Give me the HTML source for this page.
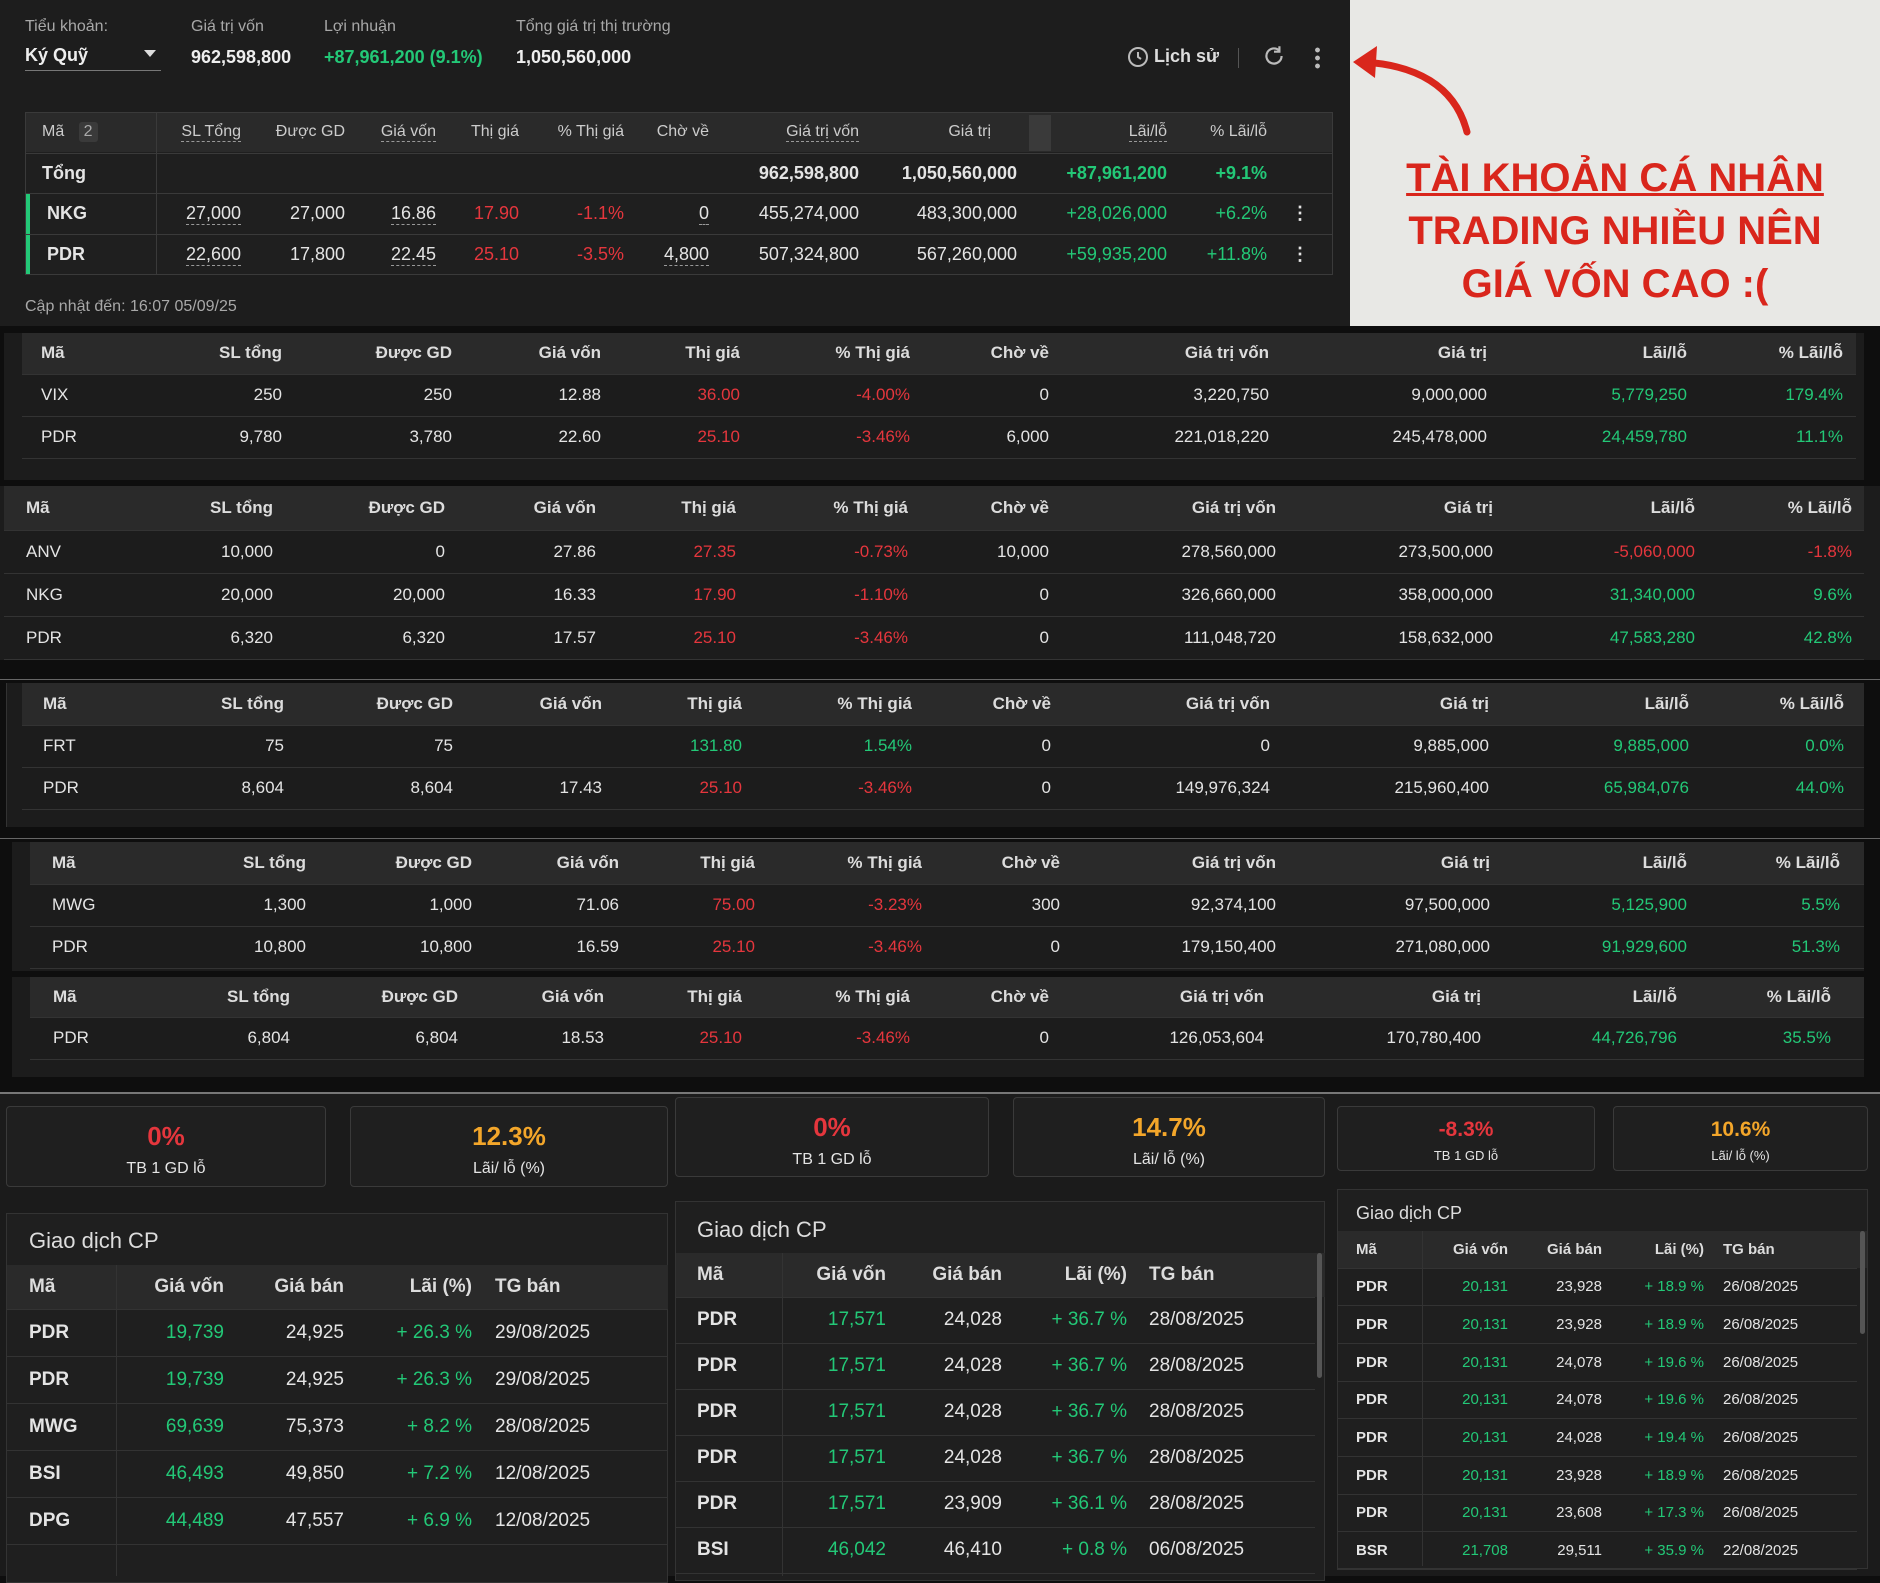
<!DOCTYPE html>
<html><head><meta charset="utf-8">
<style>
*{margin:0;padding:0;box-sizing:border-box}
body{width:1880px;height:1576px;background:#0e0e0e;position:relative;overflow:hidden;font-family:"Liberation Sans",sans-serif;color:#e4e4e4}
.abs{position:absolute}
table{position:absolute;border-collapse:collapse;table-layout:fixed}
td{text-align:right;white-space:nowrap;padding:0;overflow:visible}
td.l{text-align:left}
.g{color:#23c877}.r{color:#e5363d}.o{color:#f3a62a}
.hd td{font-weight:bold;color:#dcdcdc}
.sec{position:absolute;background:#1c1c1c}
.bt td{border-bottom:1px solid #333}
.du{border-bottom:1px dashed #999;padding-bottom:1px}
</style></head><body>

<!-- TOP SECTION -->
<div class="sec" style="left:0;top:0;width:1350px;height:326px;background:#1d1d1d"></div>
<div class="abs" style="left:25px;top:18px;font-size:16px;color:#a8a8a8">Tiểu khoản:</div>
<div class="abs" style="left:25px;top:45px;font-size:18px;font-weight:bold;color:#eee">Ký Quỹ</div>
<div class="abs" style="left:144px;top:50px;width:0;height:0;border-left:6px solid transparent;border-right:6px solid transparent;border-top:7px solid #ddd"></div>
<div class="abs" style="left:25px;top:70px;width:136px;height:1px;background:#777"></div>
<div class="abs" style="left:191px;top:18px;font-size:16px;color:#a8a8a8">Giá trị vốn</div>
<div class="abs" style="left:191px;top:47px;font-size:18px;font-weight:bold;color:#eee">962,598,800</div>
<div class="abs" style="left:324px;top:18px;font-size:16px;color:#a8a8a8">Lợi nhuận</div>
<div class="abs g" style="left:324px;top:47px;font-size:18px;font-weight:bold">+87,961,200 (9.1%)</div>
<div class="abs" style="left:516px;top:18px;font-size:16px;color:#a8a8a8">Tổng giá trị thị trường</div>
<div class="abs" style="left:516px;top:47px;font-size:18px;font-weight:bold;color:#eee">1,050,560,000</div>
<svg class="abs" style="left:1126px;top:45px" width="24" height="24" viewBox="0 0 24 24"><circle cx="12" cy="12" r="9" fill="none" stroke="#bbb" stroke-width="2"/><path d="M12 7v5l3 2" stroke="#bbb" stroke-width="2" fill="none"/></svg>
<div class="abs" style="left:1154px;top:46px;font-size:18px;font-weight:bold;color:#ddd">Lịch sử</div>
<div class="abs" style="left:1238px;top:48px;width:1px;height:20px;background:#555"></div>
<svg class="abs" style="left:1261px;top:43px" width="26" height="26" viewBox="0 0 24 24"><path d="M19 12a7 7 0 1 1-2.05-4.95" stroke="#bbb" stroke-width="2" fill="none"/><path d="M17 3v5h-5" stroke="#bbb" stroke-width="2" fill="none"/></svg>
<div class="abs" style="left:1315px;top:46px;width:5px;height:24px;background:radial-gradient(circle,#bbb 2.2px,transparent 2.6px) 0 0/5px 8px"></div>

<div class="abs" style="left:25px;top:112px;width:1308px;height:163px;border:1px solid #3a3a3a;background:#1f1f1f"></div>
<div class="abs" style="left:26px;top:113px;width:1306px;height:39px;background:#2a2a2a"></div>
<div class="abs" style="left:156px;top:113px;width:1px;height:161px;background:#3a3a3a"></div>
<div class="abs" style="left:1029px;top:115px;width:22px;height:36px;background:#3a3a3a"></div>
<div class="abs" style="left:26px;top:193px;width:4px;height:81px;background:#23c877"></div>
<table style="left:25px;top:112px;width:1308px;font-size:18px">
<colgroup><col style="width:131px"><col style="width:85px"><col style="width:104px"><col style="width:91px"><col style="width:83px"><col style="width:105px"><col style="width:85px"><col style="width:150px"><col style="width:158px"><col style="width:150px"><col style="width:100px"><col style="width:66px"></colgroup>
<tr style="height:41px;font-size:16px;color:#ccc"><td class="l" style="padding-left:17px">Mã <span style="display:inline-block;background:#3a3a3a;border-radius:3px;padding:1px 5px;margin-left:10px;color:#aaa">2</span></td><td><span class="du">SL Tổng</span></td><td>Được GD</td><td><span class="du">Giá vốn</span></td><td>Thị giá</td><td>% Thị giá</td><td>Chờ về</td><td><span class="du">Giá trị vốn</span></td><td style="padding-right:26px">Giá trị</td><td><span class="du">Lãi/lỗ</span></td><td>% Lãi/lỗ</td><td></td></tr>
<tr style="height:40px;font-weight:bold;border-top:1px solid #3a3a3a"><td class="l" style="padding-left:17px">Tổng</td><td></td><td></td><td></td><td></td><td></td><td></td><td>962,598,800</td><td>1,050,560,000</td><td class="g">+87,961,200</td><td class="g">+9.1%</td><td></td></tr>
<tr style="height:41px;border-top:1px solid #3a3a3a"><td class="l" style="padding-left:22px;font-weight:bold">NKG</td><td><span class="du">27,000</span></td><td>27,000</td><td><span class="du">16.86</span></td><td class="r">17.90</td><td class="r">-1.1%</td><td><span class="du">0</span></td><td>455,274,000</td><td>483,300,000</td><td class="g">+28,026,000</td><td class="g">+6.2%</td><td style="text-align:center;font-weight:bold">⋮</td></tr>
<tr style="height:41px;border-top:1px solid #3a3a3a"><td class="l" style="padding-left:22px;font-weight:bold">PDR</td><td><span class="du">22,600</span></td><td>17,800</td><td><span class="du">22.45</span></td><td class="r">25.10</td><td class="r">-3.5%</td><td><span class="du">4,800</span></td><td>507,324,800</td><td>567,260,000</td><td class="g">+59,935,200</td><td class="g">+11.8%</td><td style="text-align:center;font-weight:bold">⋮</td></tr>
</table>
<div class="abs" style="left:25px;top:298px;font-size:16px;color:#a8a8a8">Cập nhật đến: 16:07 05/09/25</div>

<!-- RIGHT ANNOTATION -->
<div class="abs" style="left:1350px;top:0;width:530px;height:326px;background:#e8e8e5"></div>
<div class="abs" style="left:1350px;top:152px;width:530px;text-align:center;font-size:40px;font-weight:bold;color:#d9261c;line-height:53px">
<span style="text-decoration:underline;text-decoration-thickness:3px">TÀI KHOẢN CÁ NHÂN</span><br>TRADING NHIỀU NÊN<br>GIÁ VỐN CAO :(</div>
<svg class="abs" style="left:1345px;top:40px" width="140" height="100" viewBox="0 0 140 100"><path d="M122 92 C110 45 70 25 18 22" stroke="#d9261c" stroke-width="7" fill="none" stroke-linecap="round"/><path d="M8 22 L32 6 L30 38 Z" fill="#d9261c"/></svg>

<!-- TABLE 1 -->
<div class="sec" style="left:4px;top:333px;width:1860px;height:147px"></div>
<div class="abs" style="left:22px;top:333px;width:1834px;height:41px;background:#2a2a2a"></div>
<table class="bt" style="left:22px;top:333px;width:1834px;font-size:17px">
<colgroup><col style="width:138px"><col style="width:122px"><col style="width:170px"><col style="width:149px"><col style="width:139px"><col style="width:170px"><col style="width:139px"><col style="width:220px"><col style="width:218px"><col style="width:200px"><col style="width:156px"><col style="width:13px"></colgroup>
<tr class="hd" style="height:41px"><td class="l" style="padding-left:19px">Mã</td><td>SL tổng</td><td>Được GD</td><td>Giá vốn</td><td>Thị giá</td><td>% Thị giá</td><td>Chờ về</td><td>Giá trị vốn</td><td>Giá trị</td><td>Lãi/lỗ</td><td>% Lãi/lỗ</td><td></td></tr>
<tr style="height:42px"><td class="l" style="padding-left:19px">VIX</td><td>250</td><td>250</td><td>12.88</td><td class="r">36.00</td><td class="r">-4.00%</td><td>0</td><td>3,220,750</td><td>9,000,000</td><td class="g">5,779,250</td><td class="g">179.4%</td><td></td></tr>
<tr style="height:42px"><td class="l" style="padding-left:19px">PDR</td><td>9,780</td><td>3,780</td><td>22.60</td><td class="r">25.10</td><td class="r">-3.46%</td><td>6,000</td><td>221,018,220</td><td>245,478,000</td><td class="g">24,459,780</td><td class="g">11.1%</td><td></td></tr>
</table>

<!-- TABLE 2 -->
<div class="sec" style="left:0;top:486px;width:1880px;height:174px"></div>
<div class="abs" style="left:4px;top:486px;width:1860px;height:44px;background:#2a2a2a"></div>
<table class="bt" style="left:4px;top:486px;width:1860px;font-size:17px">
<colgroup><col style="width:146px"><col style="width:123px"><col style="width:172px"><col style="width:151px"><col style="width:140px"><col style="width:172px"><col style="width:141px"><col style="width:227px"><col style="width:217px"><col style="width:202px"><col style="width:157px"><col style="width:12px"></colgroup>
<tr class="hd" style="height:44px"><td class="l" style="padding-left:22px">Mã</td><td>SL tổng</td><td>Được GD</td><td>Giá vốn</td><td>Thị giá</td><td>% Thị giá</td><td>Chờ về</td><td>Giá trị vốn</td><td>Giá trị</td><td>Lãi/lỗ</td><td>% Lãi/lỗ</td><td></td></tr>
<tr style="height:43px"><td class="l" style="padding-left:22px">ANV</td><td>10,000</td><td>0</td><td>27.86</td><td class="r">27.35</td><td class="r">-0.73%</td><td>10,000</td><td>278,560,000</td><td>273,500,000</td><td class="r">-5,060,000</td><td class="r">-1.8%</td><td></td></tr>
<tr style="height:43px"><td class="l" style="padding-left:22px">NKG</td><td>20,000</td><td>20,000</td><td>16.33</td><td class="r">17.90</td><td class="r">-1.10%</td><td>0</td><td>326,660,000</td><td>358,000,000</td><td class="g">31,340,000</td><td class="g">9.6%</td><td></td></tr>
<tr style="height:43px"><td class="l" style="padding-left:22px">PDR</td><td>6,320</td><td>6,320</td><td>17.57</td><td class="r">25.10</td><td class="r">-3.46%</td><td>0</td><td>111,048,720</td><td>158,632,000</td><td class="g">47,583,280</td><td class="g">42.8%</td><td></td></tr>
</table>
<div class="abs" style="left:0;top:679px;width:1880px;height:1px;background:#666"></div>

<!-- TABLE 3 -->
<div class="sec" style="left:6px;top:683px;width:1858px;height:144px;border-left:1px solid #333"></div>
<div class="abs" style="left:22px;top:683px;width:1842px;height:42px;background:#2a2a2a"></div>
<table class="bt" style="left:22px;top:683px;width:1842px;font-size:17px">
<colgroup><col style="width:138px"><col style="width:124px"><col style="width:169px"><col style="width:149px"><col style="width:140px"><col style="width:170px"><col style="width:139px"><col style="width:219px"><col style="width:219px"><col style="width:200px"><col style="width:155px"><col style="width:20px"></colgroup>
<tr class="hd" style="height:42px"><td class="l" style="padding-left:21px">Mã</td><td>SL tổng</td><td>Được GD</td><td>Giá vốn</td><td>Thị giá</td><td>% Thị giá</td><td>Chờ về</td><td>Giá trị vốn</td><td>Giá trị</td><td>Lãi/lỗ</td><td>% Lãi/lỗ</td><td></td></tr>
<tr style="height:42px"><td class="l" style="padding-left:21px">FRT</td><td>75</td><td>75</td><td></td><td class="g">131.80</td><td class="g">1.54%</td><td>0</td><td>0</td><td>9,885,000</td><td class="g">9,885,000</td><td class="g">0.0%</td><td></td></tr>
<tr style="height:42px"><td class="l" style="padding-left:21px">PDR</td><td>8,604</td><td>8,604</td><td>17.43</td><td class="r">25.10</td><td class="r">-3.46%</td><td>0</td><td>149,976,324</td><td>215,960,400</td><td class="g">65,984,076</td><td class="g">44.0%</td><td></td></tr>
</table>
<div class="abs" style="left:0;top:838px;width:1880px;height:1px;background:#666"></div>

<!-- TABLE 4 -->
<div class="sec" style="left:12px;top:842px;width:1852px;height:129px"></div>
<div class="abs" style="left:30px;top:842px;width:1834px;height:42px;background:#2a2a2a"></div>
<table class="bt" style="left:30px;top:842px;width:1834px;font-size:17px">
<colgroup><col style="width:140px"><col style="width:136px"><col style="width:166px"><col style="width:147px"><col style="width:136px"><col style="width:167px"><col style="width:138px"><col style="width:216px"><col style="width:214px"><col style="width:197px"><col style="width:153px"><col style="width:24px"></colgroup>
<tr class="hd" style="height:42px"><td class="l" style="padding-left:22px">Mã</td><td>SL tổng</td><td>Được GD</td><td>Giá vốn</td><td>Thị giá</td><td>% Thị giá</td><td>Chờ về</td><td>Giá trị vốn</td><td>Giá trị</td><td>Lãi/lỗ</td><td>% Lãi/lỗ</td><td></td></tr>
<tr style="height:42px"><td class="l" style="padding-left:22px">MWG</td><td>1,300</td><td>1,000</td><td>71.06</td><td class="r">75.00</td><td class="r">-3.23%</td><td>300</td><td>92,374,100</td><td>97,500,000</td><td class="g">5,125,900</td><td class="g">5.5%</td><td></td></tr>
<tr style="height:42px"><td class="l" style="padding-left:22px">PDR</td><td>10,800</td><td>10,800</td><td>16.59</td><td class="r">25.10</td><td class="r">-3.46%</td><td>0</td><td>179,150,400</td><td>271,080,000</td><td class="g">91,929,600</td><td class="g">51.3%</td><td></td></tr>
</table>

<!-- TABLE 5 -->
<div class="sec" style="left:12px;top:977px;width:1852px;height:100px"></div>
<div class="abs" style="left:30px;top:977px;width:1834px;height:40px;background:#2a2a2a"></div>
<table class="bt" style="left:30px;top:977px;width:1834px;font-size:17px">
<colgroup><col style="width:140px"><col style="width:120px"><col style="width:168px"><col style="width:146px"><col style="width:138px"><col style="width:168px"><col style="width:139px"><col style="width:215px"><col style="width:217px"><col style="width:196px"><col style="width:154px"><col style="width:33px"></colgroup>
<tr class="hd" style="height:40px"><td class="l" style="padding-left:23px">Mã</td><td>SL tổng</td><td>Được GD</td><td>Giá vốn</td><td>Thị giá</td><td>% Thị giá</td><td>Chờ về</td><td>Giá trị vốn</td><td>Giá trị</td><td>Lãi/lỗ</td><td>% Lãi/lỗ</td><td></td></tr>
<tr style="height:42px"><td class="l" style="padding-left:23px">PDR</td><td>6,804</td><td>6,804</td><td>18.53</td><td class="r">25.10</td><td class="r">-3.46%</td><td>0</td><td>126,053,604</td><td>170,780,400</td><td class="g">44,726,796</td><td class="g">35.5%</td><td></td></tr>
</table>

<!-- BOTTOM -->
<div class="abs" style="left:0;top:1092px;width:1880px;height:484px;background:#1b1b1b"></div>
<div class="abs" style="left:0;top:1092px;width:1880px;height:2px;background:#777"></div>

<div class="abs" style="left:6px;top:1106px;width:320px;height:81px;border:1px solid #3a3a3a;border-radius:4px;background:#1f1f1f;text-align:center"><div class="r" style="font-size:26px;font-weight:bold;margin-top:14px">0%</div><div style="font-size:16px;margin-top:8px">TB 1 GD lỗ</div></div>
<div class="abs" style="left:350px;top:1106px;width:318px;height:81px;border:1px solid #3a3a3a;border-radius:4px;background:#1f1f1f;text-align:center"><div class="o" style="font-size:26px;font-weight:bold;margin-top:14px">12.3%</div><div style="font-size:16px;margin-top:8px">Lãi/ lỗ (%)</div></div>
<div class="abs" style="left:675px;top:1097px;width:314px;height:80px;border:1px solid #3a3a3a;border-radius:4px;background:#1f1f1f;text-align:center"><div class="r" style="font-size:26px;font-weight:bold;margin-top:14px">0%</div><div style="font-size:16px;margin-top:8px">TB 1 GD lỗ</div></div>
<div class="abs" style="left:1013px;top:1097px;width:312px;height:80px;border:1px solid #3a3a3a;border-radius:4px;background:#1f1f1f;text-align:center"><div class="o" style="font-size:26px;font-weight:bold;margin-top:14px">14.7%</div><div style="font-size:16px;margin-top:8px">Lãi/ lỗ (%)</div></div>
<div class="abs" style="left:1337px;top:1106px;width:258px;height:65px;border:1px solid #3a3a3a;border-radius:4px;background:#1f1f1f;text-align:center"><div class="r" style="font-size:21px;font-weight:bold;margin-top:11px">-8.3%</div><div style="font-size:13px;margin-top:6px">TB 1 GD lỗ</div></div>
<div class="abs" style="left:1613px;top:1106px;width:255px;height:65px;border:1px solid #3a3a3a;border-radius:4px;background:#1f1f1f;text-align:center"><div class="o" style="font-size:21px;font-weight:bold;margin-top:11px">10.6%</div><div style="font-size:13px;margin-top:6px">Lãi/ lỗ (%)</div></div>

<!-- panel A -->
<div class="abs" style="left:6px;top:1213px;width:662px;height:370px;border:1px solid #333;background:#1f1f1f"></div>
<div class="abs" style="left:29px;top:1228px;font-size:22px;color:#ddd">Giao dịch CP</div>
<div class="abs" style="left:7px;top:1265px;width:661px;height:44px;background:#2a2a2a"></div>
<div class="abs" style="left:116px;top:1265px;width:1px;height:311px;background:#333"></div>
<table class="bt" style="left:6px;top:1265px;width:662px;font-size:19px">
<colgroup><col style="width:110px"><col style="width:108px"><col style="width:120px"><col style="width:128px"><col style="width:196px"></colgroup>
<tr class="hd" style="height:44px"><td class="l" style="padding-left:23px">Mã</td><td>Giá vốn</td><td>Giá bán</td><td>Lãi (%)</td><td class="l" style="padding-left:23px">TG bán</td></tr>
<tr style="height:47px"><td class="l" style="padding-left:23px;font-weight:bold">PDR</td><td class="g">19,739</td><td>24,925</td><td class="g">+ 26.3 %</td><td class="l" style="padding-left:23px">29/08/2025</td></tr>
<tr style="height:47px"><td class="l" style="padding-left:23px;font-weight:bold">PDR</td><td class="g">19,739</td><td>24,925</td><td class="g">+ 26.3 %</td><td class="l" style="padding-left:23px">29/08/2025</td></tr>
<tr style="height:47px"><td class="l" style="padding-left:23px;font-weight:bold">MWG</td><td class="g">69,639</td><td>75,373</td><td class="g">+ 8.2 %</td><td class="l" style="padding-left:23px">28/08/2025</td></tr>
<tr style="height:47px"><td class="l" style="padding-left:23px;font-weight:bold">BSI</td><td class="g">46,493</td><td>49,850</td><td class="g">+ 7.2 %</td><td class="l" style="padding-left:23px">12/08/2025</td></tr>
<tr style="height:47px"><td class="l" style="padding-left:23px;font-weight:bold">DPG</td><td class="g">44,489</td><td>47,557</td><td class="g">+ 6.9 %</td><td class="l" style="padding-left:23px">12/08/2025</td></tr>
</table>

<!-- panel B -->
<div class="abs" style="left:675px;top:1201px;width:650px;height:380px;border:1px solid #333;background:#1f1f1f"></div>
<div class="abs" style="left:697px;top:1217px;font-size:22px;color:#ddd">Giao dịch CP</div>
<div class="abs" style="left:676px;top:1253px;width:649px;height:44px;background:#2a2a2a"></div>
<div class="abs" style="left:782px;top:1253px;width:1px;height:323px;background:#333"></div>
<div class="abs" style="left:1317px;top:1253px;width:5px;height:125px;background:#555;border-radius:3px"></div>
<table class="bt" style="left:675px;top:1253px;width:640px;font-size:19px">
<colgroup><col style="width:107px"><col style="width:104px"><col style="width:116px"><col style="width:125px"><col style="width:188px"></colgroup>
<tr class="hd" style="height:44px"><td class="l" style="padding-left:22px">Mã</td><td>Giá vốn</td><td>Giá bán</td><td>Lãi (%)</td><td class="l" style="padding-left:22px">TG bán</td></tr>
<tr style="height:46px"><td class="l" style="padding-left:22px;font-weight:bold">PDR</td><td class="g">17,571</td><td>24,028</td><td class="g">+ 36.7 %</td><td class="l" style="padding-left:22px">28/08/2025</td></tr>
<tr style="height:46px"><td class="l" style="padding-left:22px;font-weight:bold">PDR</td><td class="g">17,571</td><td>24,028</td><td class="g">+ 36.7 %</td><td class="l" style="padding-left:22px">28/08/2025</td></tr>
<tr style="height:46px"><td class="l" style="padding-left:22px;font-weight:bold">PDR</td><td class="g">17,571</td><td>24,028</td><td class="g">+ 36.7 %</td><td class="l" style="padding-left:22px">28/08/2025</td></tr>
<tr style="height:46px"><td class="l" style="padding-left:22px;font-weight:bold">PDR</td><td class="g">17,571</td><td>24,028</td><td class="g">+ 36.7 %</td><td class="l" style="padding-left:22px">28/08/2025</td></tr>
<tr style="height:46px"><td class="l" style="padding-left:22px;font-weight:bold">PDR</td><td class="g">17,571</td><td>23,909</td><td class="g">+ 36.1 %</td><td class="l" style="padding-left:22px">28/08/2025</td></tr>
<tr style="height:46px"><td class="l" style="padding-left:22px;font-weight:bold">BSI</td><td class="g">46,042</td><td>46,410</td><td class="g">+ 0.8 %</td><td class="l" style="padding-left:22px">06/08/2025</td></tr>
</table>

<!-- panel C -->
<div class="abs" style="left:1337px;top:1189px;width:531px;height:380px;border:1px solid #333;background:#1f1f1f"></div>
<div class="abs" style="left:1356px;top:1203px;font-size:18px;color:#ddd">Giao dịch CP</div>
<div class="abs" style="left:1338px;top:1231px;width:529px;height:37px;background:#2a2a2a"></div>
<div class="abs" style="left:1422px;top:1231px;width:1px;height:335px;background:#333"></div>
<div class="abs" style="left:1860px;top:1231px;width:5px;height:103px;background:#555;border-radius:3px"></div>
<table class="bt" style="left:1337px;top:1231px;width:520px;font-size:15px">
<colgroup><col style="width:85px"><col style="width:86px"><col style="width:94px"><col style="width:102px"><col style="width:153px"></colgroup>
<tr class="hd" style="height:37px"><td class="l" style="padding-left:19px">Mã</td><td>Giá vốn</td><td>Giá bán</td><td>Lãi (%)</td><td class="l" style="padding-left:19px">TG bán</td></tr>
<tr style="height:37.7px"><td class="l" style="padding-left:19px;font-weight:bold">PDR</td><td class="g">20,131</td><td>23,928</td><td class="g">+ 18.9 %</td><td class="l" style="padding-left:19px">26/08/2025</td></tr>
<tr style="height:37.7px"><td class="l" style="padding-left:19px;font-weight:bold">PDR</td><td class="g">20,131</td><td>23,928</td><td class="g">+ 18.9 %</td><td class="l" style="padding-left:19px">26/08/2025</td></tr>
<tr style="height:37.7px"><td class="l" style="padding-left:19px;font-weight:bold">PDR</td><td class="g">20,131</td><td>24,078</td><td class="g">+ 19.6 %</td><td class="l" style="padding-left:19px">26/08/2025</td></tr>
<tr style="height:37.7px"><td class="l" style="padding-left:19px;font-weight:bold">PDR</td><td class="g">20,131</td><td>24,078</td><td class="g">+ 19.6 %</td><td class="l" style="padding-left:19px">26/08/2025</td></tr>
<tr style="height:37.7px"><td class="l" style="padding-left:19px;font-weight:bold">PDR</td><td class="g">20,131</td><td>24,028</td><td class="g">+ 19.4 %</td><td class="l" style="padding-left:19px">26/08/2025</td></tr>
<tr style="height:37.7px"><td class="l" style="padding-left:19px;font-weight:bold">PDR</td><td class="g">20,131</td><td>23,928</td><td class="g">+ 18.9 %</td><td class="l" style="padding-left:19px">26/08/2025</td></tr>
<tr style="height:37.7px"><td class="l" style="padding-left:19px;font-weight:bold">PDR</td><td class="g">20,131</td><td>23,608</td><td class="g">+ 17.3 %</td><td class="l" style="padding-left:19px">26/08/2025</td></tr>
<tr style="height:37.7px"><td class="l" style="padding-left:19px;font-weight:bold">BSR</td><td class="g">21,708</td><td>29,511</td><td class="g">+ 35.9 %</td><td class="l" style="padding-left:19px">22/08/2025</td></tr>
</table>
</body></html>
